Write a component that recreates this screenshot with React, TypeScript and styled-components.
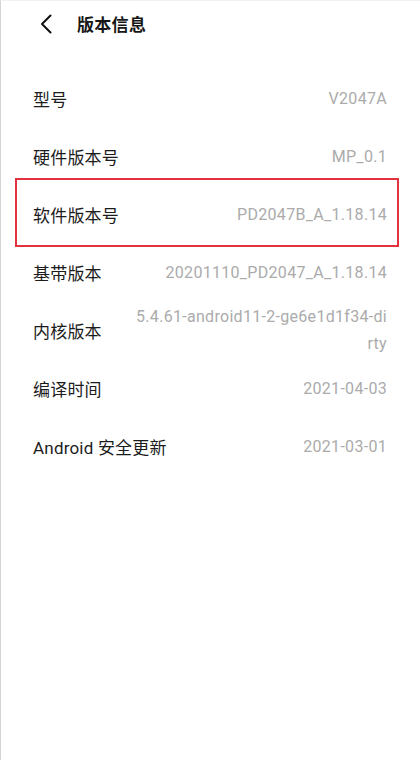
import React from 'react'
import styled, { createGlobalStyle } from 'styled-components'

const GlobalStyle = createGlobalStyle`
    html, body {
        margin: 0;
        padding: 0;
        background: #ffffff;
    }
    body {
        font-family: Roboto, "Noto Sans CJK SC", sans-serif;
        -webkit-font-smoothing: antialiased;
    }
`

type InfoItem = {
    label: string
    value: string
    highlighted?: boolean
}

const items: InfoItem[] = [
    { label: '型号', value: 'V2047A' },
    { label: '硬件版本号', value: 'MP_0.1' },
    { label: '软件版本号', value: 'PD2047B_A_1.18.14', highlighted: true },
    { label: '基带版本', value: '20201110_PD2047_A_1.18.14' },
    { label: '内核版本', value: '5.4.61-android11-2-ge6e1d1f34-dirty' },
    { label: '编译时间', value: '2021-04-03' },
    { label: 'Android 安全更新', value: '2021-03-01' },
]

export default function App() {
    return (
        <>
            <GlobalStyle />
            <Screen>
                <Header>
                    <BackButton aria-label="back">
                        <svg width="14" height="20" viewBox="0 0 14 20">
                            <polyline
                                points="11.5,1.5 3,10 11.5,18.5"
                                fill="none"
                                stroke="#111"
                                strokeWidth="2"
                                strokeLinecap="round"
                                strokeLinejoin="round"
                            />
                        </svg>
                    </BackButton>
                    <Title>版本信息</Title>
                </Header>
                <List>
                    {items.map(item => (
                        <Row key={item.label} $highlighted={item.highlighted}>
                            <Label>{item.label}</Label>
                            <Value>{item.value}</Value>
                        </Row>
                    ))}
                </List>
            </Screen>
        </>
    )
}

const Screen = styled.div`
    width: 420px;
    height: 760px;
    box-sizing: border-box;
    border-left: 1px solid #d4d4d4;
    border-top: 1px solid #f2f2f2;
    background: #ffffff;
    display: flex;
    flex-direction: column;
`

const Header = styled.div`
    height: 45px;
    display: flex;
    align-items: center;
    padding-left: 38px;
`

const BackButton = styled.span`
    display: flex;
    align-items: center;
    width: 14px;
    height: 20px;
    margin-right: 24px;
`

const Title = styled.h1`
    margin: 0;
    font-family: "Noto Sans CJK SC", sans-serif;
    font-size: 17px;
    font-weight: 700;
    color: #161616;
    letter-spacing: 0.3px;
`

const List = styled.div`
    display: flex;
    flex-direction: column;
    margin-top: 23px;
    padding: 0 33px 0 32px;
`

const Row = styled.div<{ $highlighted?: boolean }>`
    position: relative;
    height: 58px;
    display: flex;
    align-items: center;
    justify-content: space-between;
    gap: 16px;

    ${({ $highlighted }) => $highlighted && `
        &::after {
            content: '';
            position: absolute;
            top: -7px;
            bottom: -4px;
            left: -18px;
            right: -12px;
            border: 2px solid #e3323f;
            pointer-events: none;
        }
    `}
`

const Label = styled.span`
    flex-shrink: 0;
    font-family: Roboto, "Noto Sans CJK SC", sans-serif;
    font-size: 17px;
    letter-spacing: 0.2px;
    color: #1c1c1c;
`

const Value = styled.span`
    max-width: 254px;
    text-align: right;
    word-break: break-all;
    font-family: Roboto, "Noto Sans CJK SC", sans-serif;
    font-size: 16px;
    letter-spacing: 0.3px;
    line-height: 27px;
    color: #ababab;
`
